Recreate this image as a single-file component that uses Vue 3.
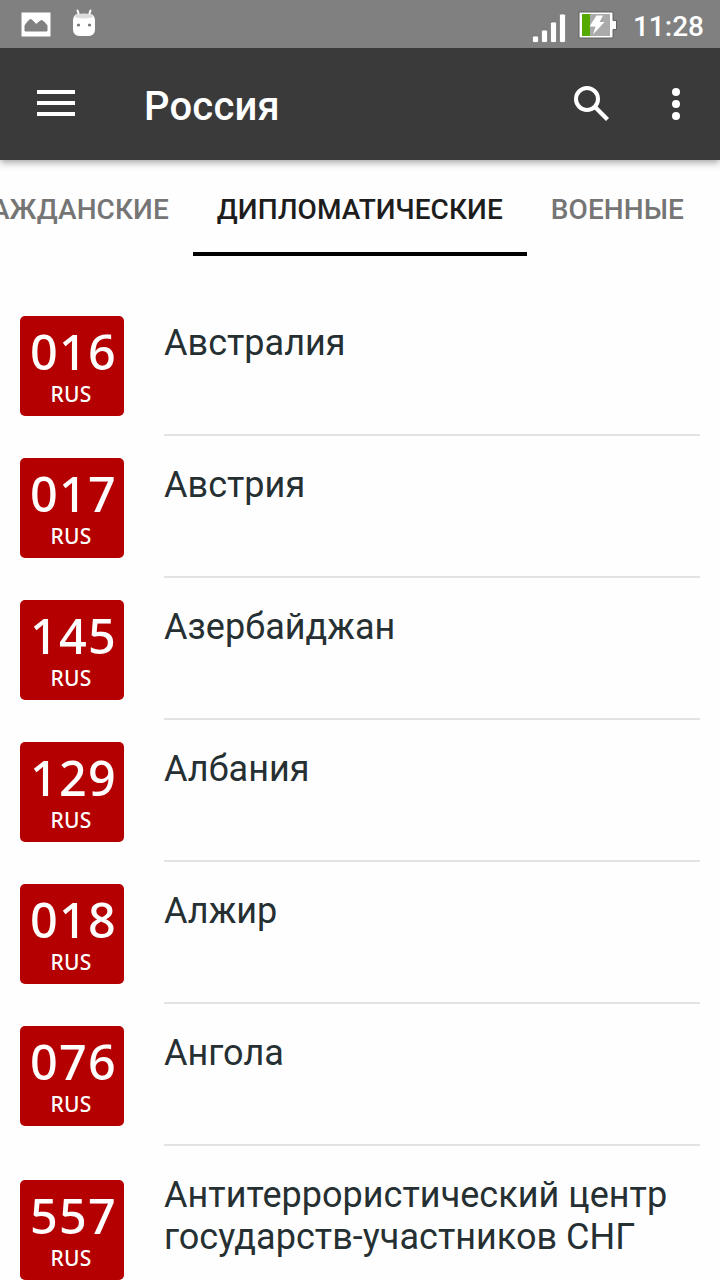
<template>
  <div class="screen">
    <div class="status-bar">
      <div class="status-left">
        <svg class="icon-photo" viewBox="0 0 30 25">
          <rect x="0.5" y="0.5" width="29" height="24" fill="#fff" />
          <path d="M4 19V13.500Q8 7.500 9.500 7.500Q11 7.500 15 12.500Q19.500 8.500 20.500 8.500Q22 8.500 26 13.500V19Z" fill="#808080" stroke="#808080" stroke-linejoin="round" />
        </svg>
        <svg class="icon-droid" viewBox="0 0 26 28">
          <path d="M6.500 1.500L8 6M19.500 1.500L18 6" stroke="#fff" stroke-width="2" stroke-linecap="round" />
          <path d="M2 13Q2 5 7 5H19Q24 5 24 13V20Q24 27 17.500 27H8.500Q2 27 2 20Z" fill="#fff" />
          <ellipse cx="13" cy="7" rx="9.500" ry="2.500" fill="#dcdcdc" />
          <circle cx="7.500" cy="16" r="1.600" fill="#777" />
          <circle cx="18.500" cy="16" r="1.600" fill="#777" />
        </svg>
      </div>
      <div class="status-right">
        <svg class="icon-signal" viewBox="0 0 34 30" fill="#fff" stroke="#646464" stroke-width="0.6">
          <rect x="0.500" y="23" width="6" height="6.500" rx="1.500" />
          <rect x="9.500" y="17" width="6" height="12.500" rx="1.500" />
          <rect x="18.500" y="9" width="6" height="20.500" rx="1.500" />
          <rect x="27.500" y="1" width="6" height="28.500" rx="1.500" />
        </svg>
        <svg class="icon-battery" viewBox="0 0 40 28">
          <path d="M1 1H35V9.500H38.500V18.500H35V27H1Z" fill="#fff" stroke="#5f5f5f" />
          <rect x="4" y="3" width="28" height="22" fill="#aaa" />
          <rect x="4" y="3" width="8" height="22" fill="#55aa00" />
          <path d="M18.500 4.500H25L21.500 11H26.500L15 23.500L17.500 15.500H11.500Z" fill="#fff" />
        </svg>
        <span class="clock">11:28</span>
      </div>
    </div>

    <header class="toolbar">
      <svg class="icon-menu" viewBox="0 0 38 26">
        <path d="M0 2H38M0 13H38M0 24H38" stroke="#fff" stroke-width="4" />
      </svg>
      <h1 class="title">Россия</h1>
      <svg class="icon-search" viewBox="0 0 36 36" fill="none" stroke="#fff">
        <circle cx="14" cy="13" r="11" stroke-width="4" />
        <path d="M22.500 21.500L34.500 33.500" stroke-width="4.200" />
      </svg>
      <svg class="icon-more" viewBox="0 0 8 32" fill="#fff">
        <circle cx="4" cy="4" r="4" />
        <circle cx="4" cy="16" r="4" />
        <circle cx="4" cy="28" r="4" />
      </svg>
    </header>

    <nav class="tabs">
      <div v-for="tab in tabs" :key="tab" class="tab" :class="{ active: tab === activeTab }">{{ tab }}</div>
    </nav>

    <ul class="list">
      <li v-for="item in items" :key="item.code" class="row">
        <div class="badge">
          <span class="badge-code">{{ item.code }}</span>
          <span class="badge-country">RUS</span>
        </div>
        <div class="row-text">{{ item.name }}</div>
      </li>
    </ul>
  </div>
</template>

<script setup>
const activeTab = 'ДИПЛОМАТИЧЕСКИЕ';
const tabs = ['ГРАЖДАНСКИЕ', activeTab, 'ВОЕННЫЕ'];

const items = [
  { code: '016', name: 'Австралия' },
  { code: '017', name: 'Австрия' },
  { code: '145', name: 'Азербайджан' },
  { code: '129', name: 'Албания' },
  { code: '018', name: 'Алжир' },
  { code: '076', name: 'Ангола' },
  { code: '557', name: 'Антитеррористический центр государств-участников СНГ' }
];
</script>

<style>
body {
  margin: 0;
  background: #fefefe;
}
</style>

<style scoped>
.screen {
  display: flex;
  flex-direction: column;
  width: 720px;
  height: 1280px;
  overflow: hidden;
  background: #fefefe;
  font-family: Roboto, sans-serif;
}

.screen svg {
  display: block;
  flex-shrink: 0;
}

.status-bar {
  position: relative;
  z-index: 1;
  display: flex;
  flex-shrink: 0;
  justify-content: space-between;
  height: 48px;
  box-sizing: border-box;
  padding: 0 16px 0 21px;
  background: #808080;
}

.status-left,
.status-right {
  display: flex;
  align-items: flex-start;
}

.icon-photo {
  width: 30px;
  height: 25px;
  margin-top: 12px;
}

.icon-droid {
  width: 26px;
  height: 28px;
  margin: 9px 0 0 20px;
}

.icon-signal {
  width: 34px;
  height: 30px;
  margin-top: 13px;
}

.icon-battery {
  width: 40px;
  height: 28px;
  margin: 11px 0 0 12px;
}

.clock {
  margin-left: 15px;
  font-size: 28px;
  font-weight: 500;
  line-height: 53px;
  color: #fff;
}

.toolbar {
  display: flex;
  flex-shrink: 0;
  align-items: center;
  height: 112px;
  box-sizing: border-box;
  padding: 0 40px 0 37px;
  background: #3a3a3a;
  box-shadow: 0 2px 8px rgba(0, 0, 0, 0.4);
}

.icon-menu {
  width: 38px;
  height: 26px;
  margin-bottom: 2px;
}

.title {
  flex: 1;
  margin: 5px 0 0 69px;
  font-size: 40px;
  font-weight: 500;
  line-height: 48px;
  letter-spacing: 0.2px;
  color: #fff;
}

.icon-search {
  width: 36px;
  height: 36px;
}

.icon-more {
  width: 8px;
  height: 32px;
  margin-left: 63px;
}

.tabs {
  display: flex;
  flex-shrink: 0;
  justify-content: flex-end;
  height: 96px;
  padding-right: 12px;
}

.tab {
  flex-shrink: 0;
  box-sizing: border-box;
  height: 96px;
  padding: 0 24px;
  font-size: 28px;
  font-weight: 500;
  line-height: 99px;
  letter-spacing: 0.08px;
  color: #757575;
}

.tab.active {
  border-bottom: 4px solid #000;
  color: #1d1d1d;
}

.list {
  margin: 40px 0 0;
  padding: 0 20px;
  list-style: none;
}

.row {
  display: flex;
  align-items: center;
  gap: 40px;
  margin-bottom: 2px;
}

.badge {
  display: flex;
  flex-direction: column;
  flex-shrink: 0;
  align-items: center;
  width: 104px;
  height: 100px;
  border-radius: 5px;
  background: #b40000;
  font-family: "Noto Sans", sans-serif;
  font-weight: 550;
  color: #fff;
}

.badge-code {
  padding: 7px 0 0 3px;
  font-size: 48.5px;
  line-height: 57px;
  letter-spacing: 1.2px;
}

.badge-country {
  padding-right: 2px;
  font-size: 21px;
  line-height: 28px;
  letter-spacing: 0.2px;
}

.row-text {
  flex: 1;
  box-sizing: border-box;
  min-height: 140px;
  padding: 26px 0 52px;
  border-bottom: 2px solid #e2e2e2;
  font-size: 36px;
  line-height: 42px;
  letter-spacing: 0.03px;
  color: #263032;
}
</style>
